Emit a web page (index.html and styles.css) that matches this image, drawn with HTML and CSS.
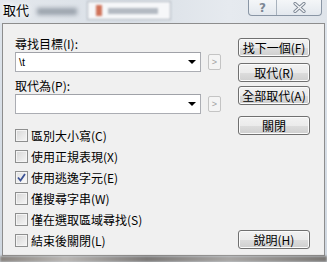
FILE: index.html
```html
<!DOCTYPE html>
<html lang="zh-Hant">
<head>
    <meta charset="UTF-8">
    <title>取代</title>
    <link rel="stylesheet" href="styles.css">
</head>
<body>
    <div class="window">
        <div class="titlebar">
            <span class="title">取代</span>
            <span class="blur-text"></span>
            <span class="blur-tab"><i></i><b></b></span>
            <div class="caption-buttons">
                <span class="cap-btn help">?</span>
                <span class="cap-btn close">
                    <svg width="13" height="11" viewBox="0 0 13 11">
                        <path d="M2 1.5 L11 9.5 M11 1.5 L2 9.5" stroke="#7d8794" stroke-width="3.2" stroke-linecap="round"/>
                        <path d="M2 1.5 L11 9.5 M11 1.5 L2 9.5" stroke="#f4f6f8" stroke-width="1.4" stroke-linecap="round"/>
                    </svg>
                </span>
            </div>
        </div>

        <div class="client">
            <div class="left">
                <label class="field-label">尋找目標(I):</label>
                <div class="combo-row">
                    <div class="combo">
                        <span class="combo-text">\t</span>
                        <span class="arrow"></span>
                    </div>
                    <span class="mini-btn">&gt;</span>
                </div>

                <label class="field-label second">取代為(P):</label>
                <div class="combo-row">
                    <div class="combo">
                        <span class="combo-text"></span>
                        <span class="arrow"></span>
                    </div>
                    <span class="mini-btn">&gt;</span>
                </div>

                <ul class="options">
                    <li><span class="check"></span>區別大小寫(C)</li>
                    <li><span class="check"></span>使用正規表現(X)</li>
                    <li>
                        <span class="check checked">
                            <svg width="9" height="9" viewBox="0 0 9 9">
                                <path d="M1 4.5 L3.5 7.5 L8 1" fill="none" stroke="#3c5396" stroke-width="1.8"/>
                            </svg>
                        </span>使用逃逸字元(E)
                    </li>
                    <li><span class="check"></span>僅搜尋字串(W)</li>
                    <li><span class="check"></span>僅在選取區域尋找(S)</li>
                    <li><span class="check"></span>結束後關閉(L)</li>
                </ul>
            </div>

            <div class="right">
                <button class="btn first">找下一個(F)</button>
                <button class="btn">取代(R)</button>
                <button class="btn third">全部取代(A)</button>
                <button class="btn fourth">關閉</button>
                <button class="btn help-btn">說明(H)</button>
            </div>
        </div>

        <div class="bottom-edge"></div>
    </div>
</body>
</html>
```

FILE: styles.css
```css
body {
    margin: 0;
    font-family: "Noto Sans CJK TC", "Noto Sans", sans-serif;
    font-size: 12px;
    color: #000;
}

.window {
    width: 327px;
    height: 262px;
    background: linear-gradient(#dfe5ec, #cfd7e0);
    overflow: hidden;
}

.titlebar {
    height: 23px;
    display: flex;
    align-items: flex-start;
    background: linear-gradient(90deg, #e4e8ed, #d9dfe6 40%, #e6eaef 70%, #dfe4ea);
}

.title {
    margin: 2px 0 0 3px;
    font-size: 13px;
    line-height: 16px;
    text-shadow: 0 0 4px #fff, 0 0 6px #fff;
}

.blur-text {
    width: 40px;
    height: 7px;
    margin: 8px 0 0 8px;
    background: #9aa2ac;
    filter: blur(2px);
}

.blur-tab {
    width: 82px;
    height: 17px;
    margin: 1px 0 0 10px;
    background: #f6f7f9;
    border: 1px solid #aeb4bc;
    filter: blur(1.2px);
    display: flex;
    align-items: center;
    gap: 6px;
}

.blur-tab i {
    width: 6px;
    height: 11px;
    margin-left: 8px;
    background: #d0735a;
}

.blur-tab b {
    width: 50px;
    height: 6px;
    background: #b4bac2;
}

.caption-buttons {
    margin-left: auto;
    margin-right: 5px;
    display: flex;
    height: 15px;
    border: 1px solid #8a96a5;
    border-top: none;
    border-radius: 0 0 4px 4px;
    overflow: hidden;
    background: linear-gradient(#f4f6f8, #e3e8ee);
}

.cap-btn {
    display: flex;
    justify-content: center;
    align-items: center;
    color: #7d8794;
    font-weight: bold;
    font-size: 12px;
    font-family: "DejaVu Sans", sans-serif;
}

.cap-btn.help {
    width: 27px;
    border-right: 1px solid #a8b2bd;
}

.cap-btn.close {
    width: 44px;
}

.client {
    height: 233px;
    margin: 0 2px;
    box-sizing: border-box;
    border: 1px solid #8d8d8d;
    background: #f0f0f0;
    padding: 13px 14px 6px 12px;
    display: flex;
    gap: 16px;
}

.left {
    width: 207px;
    display: flex;
    flex-direction: column;
}

.field-label {
    line-height: 14px;
    height: 14px;
    margin-bottom: 1px;
}

.field-label.second {
    margin-top: 7px;
}

.combo-row {
    display: flex;
    align-items: center;
    gap: 7px;
}

.combo {
    width: 186px;
    height: 20px;
    box-sizing: border-box;
    border: 1px solid #abadb3;
    border-top-color: #a0a2a8;
    background: #fff;
    display: flex;
    align-items: center;
    padding: 0 3px 0 3px;
}

.combo-text {
    flex: 1;
    font-family: "Liberation Sans", sans-serif;
    font-size: 11px;
}

.arrow {
    width: 0;
    height: 0;
    border-left: 4px solid transparent;
    border-right: 4px solid transparent;
    border-top: 4px solid #000;
    margin-right: 1px;
}

.mini-btn {
    width: 13px;
    height: 16px;
    box-sizing: border-box;
    border: 1px solid #c4c4c4;
    border-radius: 2px;
    background: #f4f4f4;
    color: #a0a0a0;
    font-family: "Liberation Sans", sans-serif;
    font-size: 9px;
    display: flex;
    justify-content: center;
    align-items: center;
}

.options {
    list-style: none;
    margin: 11px 0 0 0;
    padding: 0;
}

.options li {
    height: 21px;
    display: flex;
    align-items: center;
    gap: 3px;
    line-height: 14px;
}

.check {
    width: 13px;
    height: 13px;
    box-sizing: border-box;
    border: 1px solid #8e8f8f;
    background: linear-gradient(135deg, #d6d6d6, #f6f6f6);
    box-shadow: inset 0 0 0 1px #f4f4f4;
    display: flex;
    justify-content: center;
    align-items: center;
}

.check.checked {
    background: linear-gradient(135deg, #e2e2e2, #fafafa);
}

.right {
    width: 72px;
    display: flex;
    flex-direction: column;
}

.btn {
    height: 19px;
    width: 72px;
    padding: 0;
    border: 1px solid #707070;
    border-radius: 3px;
    background: linear-gradient(#f2f2f2 0%, #ebebeb 50%, #dddddd 51%, #cfcfcf 100%);
    box-shadow: inset 0 0 0 1px #fbfbfb;
    font-family: inherit;
    font-size: 12px;
    line-height: 14px;
    color: #000;
}

.btn.first {
    margin-top: 1px;
    margin-bottom: 6px;
}

.btn.third {
    margin-top: 4px;
}

.btn.fourth {
    margin-top: 11px;
}

.btn.help-btn {
    margin-top: auto;
}

.bottom-edge {
    height: 6px;
    background: linear-gradient(90deg, #8a8580, #b9b6b3 20%, #7d7a78 45%, #a8a6a4 70%, #7b7875);
    filter: blur(1px);
}
```
